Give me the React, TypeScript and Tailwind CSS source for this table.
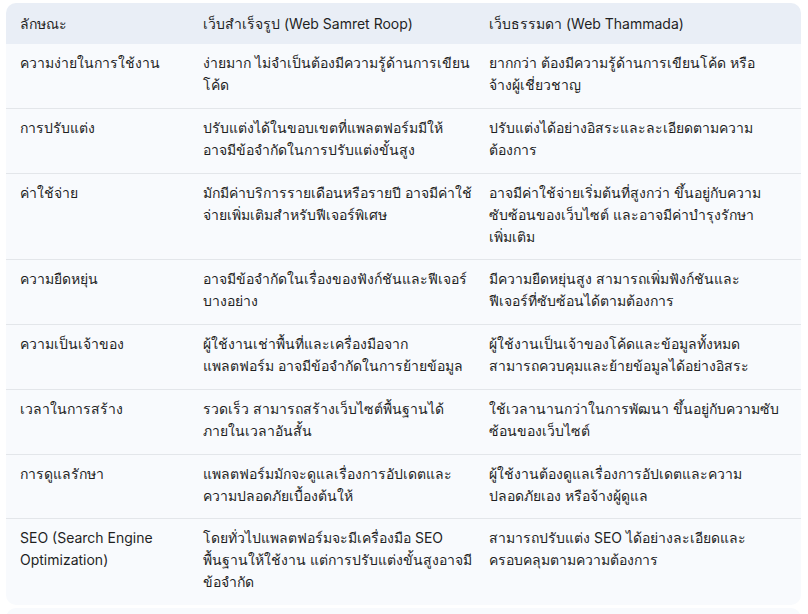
const rows: [string[], string[], string[]][] = [
  [
    ['ความง่ายในการใช้งาน'],
    ['ง่ายมาก ไม่จำเป็นต้องมีความรู้ด้านการเขียน', 'โค้ด'],
    ['ยากกว่า ต้องมีความรู้ด้านการเขียนโค้ด หรือ', 'จ้างผู้เชี่ยวชาญ'],
  ],
  [
    ['การปรับแต่ง'],
    ['ปรับแต่งได้ในขอบเขตที่แพลตฟอร์มมีให้', 'อาจมีข้อจำกัดในการปรับแต่งขั้นสูง'],
    ['ปรับแต่งได้อย่างอิสระและละเอียดตามความ', 'ต้องการ'],
  ],
  [
    ['ค่าใช้จ่าย'],
    ['มักมีค่าบริการรายเดือนหรือรายปี อาจมีค่าใช้', 'จ่ายเพิ่มเติมสำหรับฟีเจอร์พิเศษ'],
    ['อาจมีค่าใช้จ่ายเริ่มต้นที่สูงกว่า ขึ้นอยู่กับความ', 'ซับซ้อนของเว็บไซต์ และอาจมีค่าบำรุงรักษา', 'เพิ่มเติม'],
  ],
  [
    ['ความยืดหยุ่น'],
    ['อาจมีข้อจำกัดในเรื่องของฟังก์ชันและฟีเจอร์', 'บางอย่าง'],
    ['มีความยืดหยุ่นสูง สามารถเพิ่มฟังก์ชันและ', 'ฟีเจอร์ที่ซับซ้อนได้ตามต้องการ'],
  ],
  [
    ['ความเป็นเจ้าของ'],
    ['ผู้ใช้งานเช่าพื้นที่และเครื่องมือจาก', 'แพลตฟอร์ม อาจมีข้อจำกัดในการย้ายข้อมูล'],
    ['ผู้ใช้งานเป็นเจ้าของโค้ดและข้อมูลทั้งหมด', 'สามารถควบคุมและย้ายข้อมูลได้อย่างอิสระ'],
  ],
  [
    ['เวลาในการสร้าง'],
    ['รวดเร็ว สามารถสร้างเว็บไซต์พื้นฐานได้', 'ภายในเวลาอันสั้น'],
    ['ใช้เวลานานกว่าในการพัฒนา ขึ้นอยู่กับความซับ', 'ซ้อนของเว็บไซต์'],
  ],
  [
    ['การดูแลรักษา'],
    ['แพลตฟอร์มมักจะดูแลเรื่องการอัปเดตและ', 'ความปลอดภัยเบื้องต้นให้'],
    ['ผู้ใช้งานต้องดูแลเรื่องการอัปเดตและความ', 'ปลอดภัยเอง หรือจ้างผู้ดูแล'],
  ],
  [
    ['SEO (Search Engine', 'Optimization)'],
    ['โดยทั่วไปแพลตฟอร์มจะมีเครื่องมือ SEO', 'พื้นฐานให้ใช้งาน แต่การปรับแต่งขั้นสูงอาจมี', 'ข้อจำกัด'],
    ['สามารถปรับแต่ง SEO ได้อย่างละเอียดและ', 'ครอบคลุมตามความต้องการ'],
  ],
]

function Lines({ lines }: { lines: string[] }) {
  return (
    <>
      {lines.map((l, i) => (
        <div key={i} className="whitespace-nowrap">{l}</div>
      ))}
    </>
  )
}

export default function App() {
  return (
    <div
      className="min-h-screen bg-white pt-[3px] px-[6px] text-[14px] leading-[22px] text-[#1f1f1f]"
      style={{ fontFamily: 'Inter, "Noto Sans", Roboto, sans-serif' }}
    >
      <table className="w-[795px] table-fixed border-collapse">
        <colgroup>
          <col className="w-[183px]" />
          <col className="w-[286px]" />
          <col className="w-[326px]" />
        </colgroup>
        <thead>
          <tr className="bg-[#e9eef6]">
            <th className="rounded-tl-[10px] px-[14px] py-[9.5px] text-left font-normal">ลักษณะ</th>
            <th className="px-[14px] py-[9.5px] text-left font-normal">เว็บสำเร็จรูป (Web Samret Roop)</th>
            <th className="rounded-tr-[10px] px-[14px] py-[9.5px] text-left font-normal">เว็บธรรมดา (Web Thammada)</th>
          </tr>
        </thead>
        <tbody>
          {rows.map((r, i) => {
            const last = i === rows.length - 1
            return (
              <tr key={i} className={last ? 'bg-[#f8fafd]' : 'bg-[#f8fafd] border-b border-[#e3e6ea]'}>
                <td className={`px-[14px] pt-[8px] pb-[11.75px] align-top ${last ? 'rounded-bl-[10px]' : ''}`}>
                  <Lines lines={r[0]} />
                </td>
                <td className="px-[14px] pt-[8px] pb-[11.75px] align-top">
                  <Lines lines={r[1]} />
                </td>
                <td className={`px-[14px] pt-[8px] pb-[11.75px] align-top ${last ? 'rounded-br-[10px]' : ''}`}>
                  <Lines lines={r[2]} />
                </td>
              </tr>
            )
          })}
        </tbody>
      </table>
      <div className="mt-[3px] h-[20px] w-[795px] rounded-t-[10px] bg-[#f8fafd]" />
    </div>
  )
}
